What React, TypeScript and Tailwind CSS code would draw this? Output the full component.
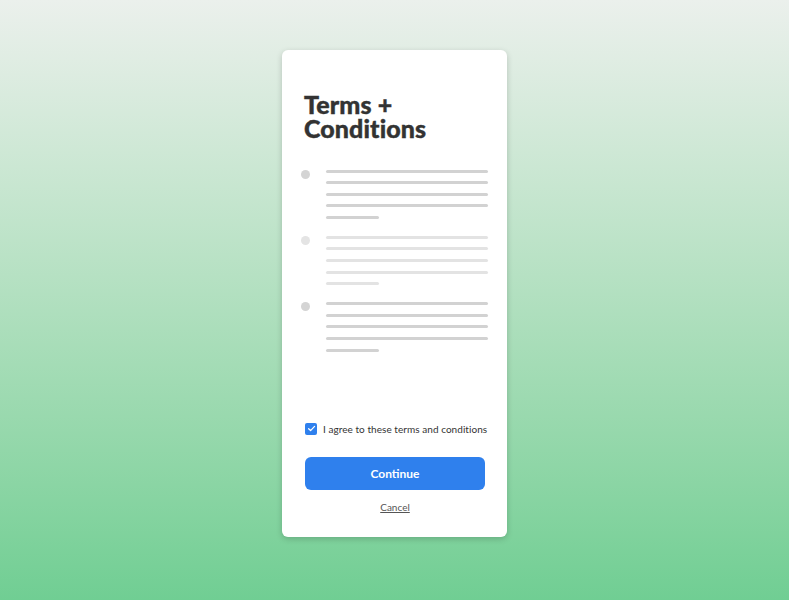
import React from "react";

const groups = [
  { dot: "bg-[#d4d4d4]", line: "bg-[#d2d2d2]" },
  { dot: "bg-[#e4e4e4]", line: "bg-[#e3e3e3]" },
  { dot: "bg-[#d4d4d4]", line: "bg-[#d2d2d2]" },
];

function Clause({ dot, line }: { dot: string; line: string }) {
  return (
    <div className="flex items-start">
      <div className={`w-[9px] h-[9px] rounded-full ${dot} ml-[-3px]`} />
      <div className="flex flex-col gap-[8.6px] ml-[16px] w-[162px]">
        <div className={`h-[3px] rounded-full ${line}`} />
        <div className={`h-[3px] rounded-full ${line}`} />
        <div className={`h-[3px] rounded-full ${line}`} />
        <div className={`h-[3px] rounded-full ${line}`} />
        <div className={`h-[3px] w-[53px] rounded-full ${line}`} />
      </div>
    </div>
  );
}

export default function App() {
  return (
    <div
      className="min-h-[600px] w-full bg-gradient-to-b from-[#ebf0ec] to-[#70ce93] flex justify-center"
      style={{ fontFamily: "Lato, 'Noto Sans', sans-serif" }}
    >
      <div className="mt-[50px] w-[225px] h-[487px] bg-white rounded-[6px] shadow-[0_2px_6px_rgba(0,0,0,0.18)] flex flex-col pl-[22px] pr-[19px] pt-[42px] pb-[23px]">
        <h1 className="text-[25px] leading-[24px] font-black text-[#333333] tracking-[0.1px] [-webkit-text-stroke:0.4px_#333333]">
          <span className="block">Terms +</span>
          <span className="block">Conditions</span>
        </h1>

        <div className="mt-[29.5px] flex flex-col gap-[17px]">
          {groups.map((g, i) => (
            <Clause key={i} dot={g.dot} line={g.line} />
          ))}
        </div>

        <div className="flex-1" />

        <label className="flex items-center h-[12px] ml-[1px] whitespace-nowrap">
          <span className="shrink-0 w-[12px] h-[12px] rounded-[2px] bg-[#2f80ed] flex items-center justify-center">
            <svg width="9" height="9" viewBox="0 0 10 10" fill="none">
              <path d="M1.8 5.2 L4 7.3 L8.4 2.6" stroke="white" strokeWidth="1.4" strokeLinecap="round" strokeLinejoin="round" />
            </svg>
          </span>
          <span className="ml-[6px] text-[10px] leading-[12px] text-[#333333] whitespace-nowrap tracking-[0.05px]">
            I agree to these terms and conditions
          </span>
        </label>

        <button className="mt-[22.5px] ml-[1px] w-[180px] h-[33px] rounded-[6px] bg-[#2f80ed] text-white text-[12px] font-bold">
          Continue
        </button>

        <div className="mt-[10px] text-center text-[10px] leading-[14px] text-[#555555] underline ml-[1px] w-[180px]">
          Cancel
        </div>
      </div>
    </div>
  );
}
